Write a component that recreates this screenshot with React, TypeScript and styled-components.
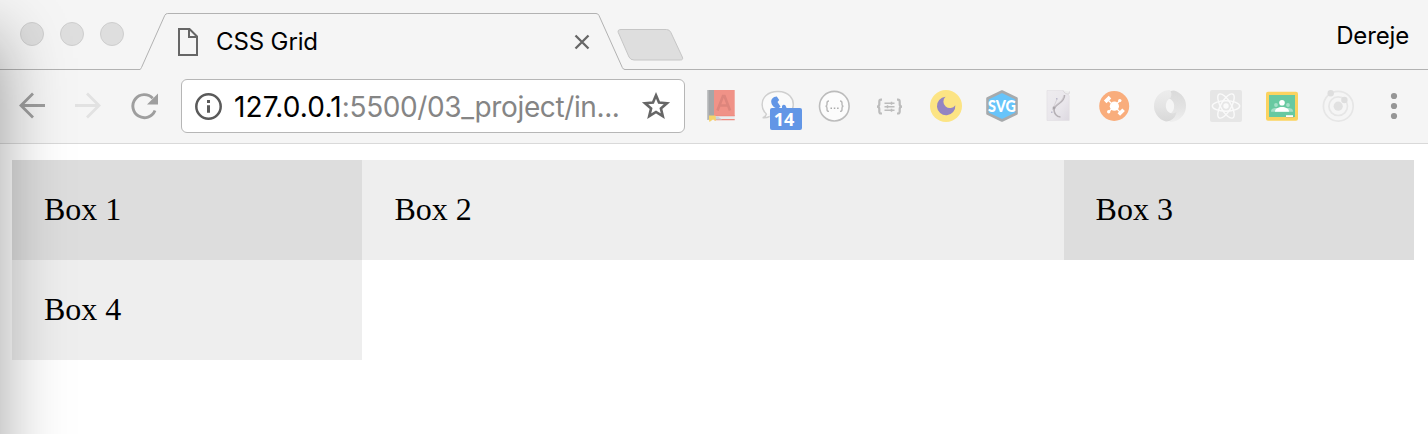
import React from 'react';
import styled, { createGlobalStyle } from 'styled-components';

const GlobalStyle = createGlobalStyle`
  * { box-sizing: border-box; }
  body { margin: 0; background: #fff; overflow: hidden; }
`;

const Window = styled.div`
  position: relative;
  width: 1428px;
  height: 434px;
  overflow: hidden;
  background: #fff;
  font-family: Inter, 'Liberation Sans', sans-serif;
  font-weight: 400;
  color: #000;
`;

const TabStrip = styled.div`
  display: flex;
  height: 70px;
  background: #f5f5f5;
  box-shadow: inset 0 -1px 0 #b2b2b2;
`;

const TrafficLights = styled.div`
  display: flex;
  gap: 16px;
  width: 140px;
  padding: 22px 0 0 20px;
`;

const Light = styled.span`
  width: 24px;
  height: 24px;
  border: 1px solid #cecece;
  border-radius: 50%;
  background: #dedede;
`;

const Tab = styled.div`
  position: relative;
  width: 485px;
  height: 70px;
  display: flex;
  align-items: center;
  padding: 14px 35px 0 37px;
`;

const TabShape = styled.svg`
  position: absolute;
  inset: 0;
`;

const TabTitle = styled.span`
  position: relative;
  flex: 1;
  margin-left: 17px;
  font-size: 24px;
  line-height: 30px;
  letter-spacing: -0.12px;
`;

const Glyph = styled.svg`
  position: relative;
  flex: none;
  display: block;
`;

const NewTab = styled.svg`
  flex: none;
  margin: 27px 0 0 -9px;
`;

const Profile = styled.span`
  margin-left: auto;
  padding: 21px 19px 0 0;
  font-size: 24px;
  line-height: 30px;
  letter-spacing: -0.15px;
`;

const Toolbar = styled.div`
  display: flex;
  align-items: center;
  height: 74px;
  padding-bottom: 2px;
  background: #f5f5f5;
  border-bottom: 1px solid #d9d9d9;
`;

const Navigation = styled.div`
  display: flex;
  gap: 24px;
  width: 181px;
  padding-left: 16px;
`;

const AddressBar = styled.div`
  display: flex;
  align-items: center;
  width: 504px;
  height: 54px;
  padding: 0 12px;
  border: 1px solid #b6b6b6;
  border-radius: 6px;
  background: #fff;
`;

const Url = styled.span`
  flex: 1;
  margin: 2px 0 0 11px;
  font-size: 28px;
  line-height: 36px;
  letter-spacing: -0.38px;
  white-space: nowrap;
  color: #858585;
`;

const Host = styled.span`
  color: #000;
  letter-spacing: 0.15px;
`;

const Extensions = styled.div`
  display: flex;
  padding-left: 9px;
`;

const Extension = styled.div`
  position: relative;
  display: flex;
  justify-content: center;
  width: 56px;
`;

const Badge = styled.span`
  position: absolute;
  left: 20px;
  top: 22px;
  width: 32px;
  height: 22px;
  padding-right: 4px;
  border-radius: 2px;
  background: #6296e6;
  color: #fff;
  font: 700 18px/23px 'Open Sans', sans-serif;
  text-align: center;
`;

const Grid = styled.main`
  display: grid;
  grid-template-columns: 350.4px 701.2px 350.4px;
  grid-auto-rows: 100px;
  padding: 16px 14px 0 12px;
`;

const Box = styled.div<{ $dark?: boolean }>`
  padding: 31px 32px;
  background: ${(p) => (p.$dark ? '#ddd' : '#eee')};
  font: 32px/36px 'Liberation Serif', serif;
`;

const EdgeShadow = styled.div`
  position: absolute;
  left: -300px;
  top: 36px;
  width: 300px;
  height: 700px;
  box-shadow: 0 0 64px rgba(0, 0, 0, 0.37);
  pointer-events: none;
`;

const icons: { name: string; badge?: string; art: React.ReactNode }[] = [
  {
    name: 'dictionary',
    art: (
      <>
        <path d="M5.5 4H12v27l-6.500 3z" fill="#a4a6a8" />
        <path d="M5.500 4h1.200v30H5.500z" fill="#b9bbbc" />
        <path d="M12 4h20.700v26H12z" fill="#f09287" />
        <path d="M12 30h20.700v3.300H12z" fill="#e9eded" />
        <path d="M12 33h20.700v1.300H12zM12 29.200h20.700v1H12z" fill="#ee8b80" />
        <path d="M15.500 24.500 21 10h1.500L28 24.500M17.500 19.500h8.500" fill="none" stroke="#dd857c" strokeWidth="2.600" />
        <path d="M12 30.500h4l4 3h-8z" fill="#c9d3da" />
        <path d="M7 29.500h6.500l.5 5.500-3-1.500-3.500 2.500-.5-2z" fill="#f5d46b" />
      </>
    ),
  },
  {
    name: 'chat',
    badge: '14',
    art: (
      <>
        <path d="M8.500 28C2.500 23 3 14 8 9.500c6-5.500 18.500-5.300 24 .5 3.500 3.700 4 8 2.500 13M8.500 28c-.5 1.500-2 3.200-3.800 3.800 2.500.2 5-.3 7-1.500" fill="#fafafa" stroke="#cfcfcf" strokeWidth="1.500" />
        <path d="M18.800 10.500c-4 .3-6 2.800-5.500 6 .5 3.300 3.500 5.800 7 6l2.200-2-3-4.500 1.700-2zM24 20a2 2 0 0 1 3.500-.5L29 23h-5z" fill="#6296e6" />
      </>
    ),
  },
  {
    name: 'json-viewer',
    art: (
      <>
        <circle cx="20.300" cy="20.200" r="14.800" fill="#fcfcfc" stroke="#bcbcbc" strokeWidth="1.600" />
        <path d="M15 15c-2 0-2 .7-2 2v1.500c0 1.100-.6 1.700-1.500 1.700.9 0 1.500.6 1.500 1.700v1.500c0 1.300 0 2 2 2M26 15c2 0 2 .7 2 2v1.500c0 1.100.6 1.700 1.500 1.700-.9 0-1.500.6-1.500 1.700v1.500c0 1.300 0 2-2 2" fill="none" stroke="#b8b8b8" strokeWidth="1.400" />
        <path d="M16.500 21.500h1.500v1.500h-1.500zM19.800 21.500h1.500v1.500h-1.500zM23.100 21.500h1.500v1.500h-1.500z" fill="#aaa" />
      </>
    ),
  },
  {
    name: 'json-format',
    art: (
      <g fill="none" stroke="#bcbcbc">
        <path d="M12 13.700h-1c-1.300 0-1.700.8-1.700 2v2.600c0 1.500-.8 2.300-2.300 2.300 1.500 0 2.300.8 2.300 2.300v2.600c0 1.200.4 2 1.700 2h1M27 13.700h1c1.300 0 1.700.8 1.700 2v2.600c0 1.500.8 2.300 2.300 2.300-1.500 0-2.300.8-2.300 2.300v2.600c0 1.200-.4 2-1.700 2h-1" strokeWidth="2.200" />
        <path d="M14.500 17.300h10M14.500 20.800h10M14.500 24.300h10" strokeWidth="1.400" />
        <path d="M21.500 15.800v3M17.500 19.300v3M21.500 22.800v3" strokeWidth="1.500" />
      </g>
    ),
  },
  {
    name: 'night-mode',
    art: (
      <>
        <circle cx="20" cy="20" r="16" fill="#fce484" />
        <path d="M19.500 10.800a6.500 6.500 0 1 0 9.800 8.400 9.200 9.200 0 1 1-9.800-8.400z" fill="#9484c2" />
      </>
    ),
  },
  {
    name: 'svg',
    art: (
      <>
        <path d="M20 5.500 34.500 12.500v15L20 34.500 5.500 27.500v-15z" fill="#67c4fa" stroke="#a7aaac" strokeWidth="2.600" strokeLinejoin="round" />
        <text x="20" y="25.800" textAnchor="middle" textLength="28" lengthAdjust="spacingAndGlyphs" fontFamily="Lato, sans-serif" fontWeight="900" fontSize="16" fill="#fff">SVG</text>
      </>
    ),
  },
  {
    name: 'quill',
    art: (
      <>
        <defs>
          <linearGradient id="paper" x1="0" y1="0" x2="1" y2="1">
            <stop offset="0" stopColor="#eeecef" />
            <stop offset=".6" stopColor="#e9e6eb" />
            <stop offset="1" stopColor="#dcd8e0" />
          </linearGradient>
        </defs>
        <path d="M9 4.500h16l3 2.500 3.200 2.500V34.500H9z" fill="url(#paper)" stroke="#e2dfe4" strokeWidth=".7" />
        <path d="M25 4.500c1 2 3 4 6 3.500l.5-2.500" fill="#eee" stroke="#d5d2d6" strokeWidth=".8" />
        <path d="M26.500 9c.5 8-11 9.500-10.500 15 .3 4 2.500 6.500 6.500 7" fill="none" stroke="#b5b0b5" strokeWidth="1.600" />
        <path d="M25.500 10c-1 7-8.500 7.500-10.500 13.500M14.500 24l4.500-11" fill="none" stroke="#d0ccd1" strokeWidth=".8" />
        <circle cx="16" cy="22" r="1.400" fill="#aaa5aa" />
        <path d="M18 12h1.500v1.500H18zM13 25.500h1.500V27H13z" fill="#bcb9cc" />
      </>
    ),
  },
  {
    name: 'hub',
    art: (
      <>
        <circle cx="20.200" cy="20" r="15" fill="#f9ad7c" />
        <g stroke="#fff" fill="none">
          <path d="m14.500 14.500 12 12M25.500 15l-11 11" strokeWidth="1.300" />
          <path d="m11.200 15.800 4.800-4.600M24.800 28.500l4.800-4.700" strokeWidth="3.700" />
        </g>
        <circle cx="20.400" cy="20.200" r="4.600" fill="#fff" />
        <circle cx="25.800" cy="14.600" r="1.700" fill="#fff" />
        <circle cx="14.700" cy="25.800" r="1.700" fill="#fff" />
      </>
    ),
  },
  {
    name: 'swirl',
    art: (
      <>
        <defs>
          <linearGradient id="swirlRight" x1="0" y1="0" x2="0" y2="1">
            <stop offset="0" stopColor="#dadada" />
            <stop offset=".5" stopColor="#e2e2e2" />
            <stop offset="1" stopColor="#efefef" />
          </linearGradient>
          <linearGradient id="swirlLeft" x1="0" y1="0" x2="0" y2="1">
            <stop offset="0" stopColor="#ededed" />
            <stop offset=".5" stopColor="#e4e4e4" />
            <stop offset="1" stopColor="#d8d8d8" />
          </linearGradient>
        </defs>
        <path d="M24 4.500A16 16 0 0 1 20 36c-1.500-2-2-5-.5-8 5-2 6-9.500 3-13-2.500-3-6-3-9-1C14.500 8 18.500 5 24 4.500z" fill="url(#swirlRight)" />
        <path d="M16 35.500A16 16 0 0 1 20 4c1.500 2 2 5 .5 8-5 2-6 9.500-3 13 2.500 3 6 3 9 1C25.500 32 21.500 35 16 35.500z" fill="url(#swirlLeft)" />
      </>
    ),
  },
  {
    name: 'react',
    art: (
      <>
        <rect x="4" y="4" width="32" height="32" rx="2" fill="#e6e6e6" />
        <g fill="none" stroke="#fafafa" strokeWidth="1.400">
          <ellipse cx="20" cy="20" rx="13.700" ry="5.200" />
          <ellipse cx="20" cy="20" rx="13.700" ry="5.200" transform="rotate(60 20 20)" />
          <ellipse cx="20" cy="20" rx="13.700" ry="5.200" transform="rotate(120 20 20)" />
        </g>
        <circle cx="20" cy="20" r="2.700" fill="#fafafa" />
      </>
    ),
  },
  {
    name: 'classroom',
    art: (
      <>
        <rect x="4" y="5.700" width="32" height="29" rx="2" fill="#fbd35f" />
        <path d="M7 9h26v22H7z" fill="#68c9a1" />
        <circle cx="14" cy="19" r="1.900" fill="#a6dfc8" />
        <circle cx="26" cy="19" r="1.900" fill="#a6dfc8" />
        <path d="M9 25.700c0-3 2-3.700 5-3.700h12c3 0 5 .7 5 3.700z" fill="#a6dfc8" />
        <circle cx="20" cy="16.700" r="2.800" fill="#fff" />
        <path d="M13 25.700c0-3.200 3.500-4.700 7-4.700s7 1.500 7 4.700z" fill="#fff" />
        <path d="M24 29.200h7V31h-7z" fill="#fff" />
        <path d="M24 31h8v1h-8z" fill="#e3c26a" />
      </>
    ),
  },
  {
    name: 'orbit',
    art: (
      <>
        <circle cx="20.300" cy="20.200" r="14.900" fill="none" stroke="#e6e6e6" strokeWidth="1.700" />
        <circle cx="20.200" cy="20.200" r="9.300" fill="none" stroke="#e6e6e6" strokeWidth="1.700" />
        <circle cx="20.200" cy="20.200" r="4.600" fill="#e1e1e1" />
        <circle cx="12.700" cy="7.300" r="3.200" fill="#dedede" />
        <circle cx="26.400" cy="14" r="3.200" fill="#dedede" />
      </>
    ),
  },
  {
    name: 'menu',
    art: (
      <g fill="#969696">
        <circle cx="20" cy="10" r="3.100" />
        <circle cx="20" cy="20" r="3.100" />
        <circle cx="20" cy="30" r="3.100" />
      </g>
    ),
  },
];

export default function App() {
  return (
    <Window>
      <GlobalStyle />
      <TabStrip>
        <TrafficLights>
          <Light />
          <Light />
          <Light />
        </TrafficLights>
        <Tab>
          <TabShape width="485" height="70" viewBox="0 0 485 70">
            <path d="M0 70v-.5l1.500-2L24.800 15.300q.9-1.800 2.900-1.800H456q2 0 2.900 1.800L482.300 67.500q.9 2 2.700 2v.5z" fill="#f5f5f5" />
            <path d="M0 69.500q.8-.3 1.500-2L24.800 15.300q.9-1.800 2.900-1.800H456q2 0 2.900 1.800L482.300 67.500q.9 2 2.700 2" fill="none" stroke="#b2b2b2" />
          </TabShape>
          <Glyph width="22" height="30" viewBox="0 0 22 30" fill="none" stroke="#666" strokeWidth="2">
            <path d="M2 2h10.500L20 9.500V28H2zM12 2v8h8" />
          </Glyph>
          <TabTitle>CSS Grid</TabTitle>
          <Glyph width="16" height="16" viewBox="0 0 16 16" stroke="#666" strokeWidth="2.300">
            <path d="m1.500 1.500 13 13m0-13-13 13" />
          </Glyph>
        </Tab>
        <NewTab width="70" height="36" viewBox="0 0 70 36">
          <path d="M5 2.500h45.500q3 0 4.300 2.800L66.300 30q1.200 3-2 3H18q-3.500 0-5-3L2.200 5.300Q1.500 2.500 5 2.500z" fill="#dedede" stroke="#c6c6c6" />
        </NewTab>
        <Profile>Dereje</Profile>
      </TabStrip>
      <Toolbar>
        <Navigation>
          <Glyph width="32" height="32" viewBox="0 0 32 32" fill="none" stroke="#9e9e9e" strokeWidth="2.800">
            <path d="M29 15.500H5M17 3.500l-12 12 12 12" />
          </Glyph>
          <Glyph width="32" height="32" viewBox="0 0 32 32" fill="none" stroke="#e2e2e2" strokeWidth="2.800">
            <path d="M3 15.500h24M15 3.500l12 12-12 12" />
          </Glyph>
          <Glyph width="32" height="32" viewBox="0 0 32 32">
            <path d="M24.700 8.200A11.500 11.500 0 1 0 27 20.500" fill="none" stroke="#9e9e9e" strokeWidth="2.900" />
            <path d="M30 3.500v11H19z" fill="#9e9e9e" />
          </Glyph>
        </Navigation>
        <AddressBar>
          <Glyph width="29" height="30" viewBox="0 0 29 30">
            <circle cx="14.500" cy="15.500" r="12.200" fill="none" stroke="#5a5a5a" strokeWidth="2.500" />
            <path d="M13 9h3v3h-3zM13 14.200h3v7.600h-3z" fill="#5a5a5a" />
          </Glyph>
          <Url><Host>127.0.0.1</Host>:5500/03_project/in...</Url>
          <Glyph width="32" height="32" viewBox="0 0 32 32">
            <path d="m16 5.300 3 7.300 7.900.6-6 5.200 1.900 7.800-6.800-4.200-6.800 4.200 1.900-7.800-6-5.200 7.900-.6z" fill="none" stroke="#666" strokeWidth="2.600" />
          </Glyph>
        </AddressBar>
        <Extensions>
          {icons.map((icon) => (
            <Extension key={icon.name}>
              <Glyph width="40" height="40" viewBox="0 0 40 40">{icon.art}</Glyph>
              {icon.badge && <Badge>{icon.badge}</Badge>}
            </Extension>
          ))}
        </Extensions>
      </Toolbar>
      <Grid>
        <Box $dark>Box 1</Box>
        <Box>Box 2</Box>
        <Box $dark>Box 3</Box>
        <Box>Box 4</Box>
      </Grid>
      <EdgeShadow />
    </Window>
  );
}
